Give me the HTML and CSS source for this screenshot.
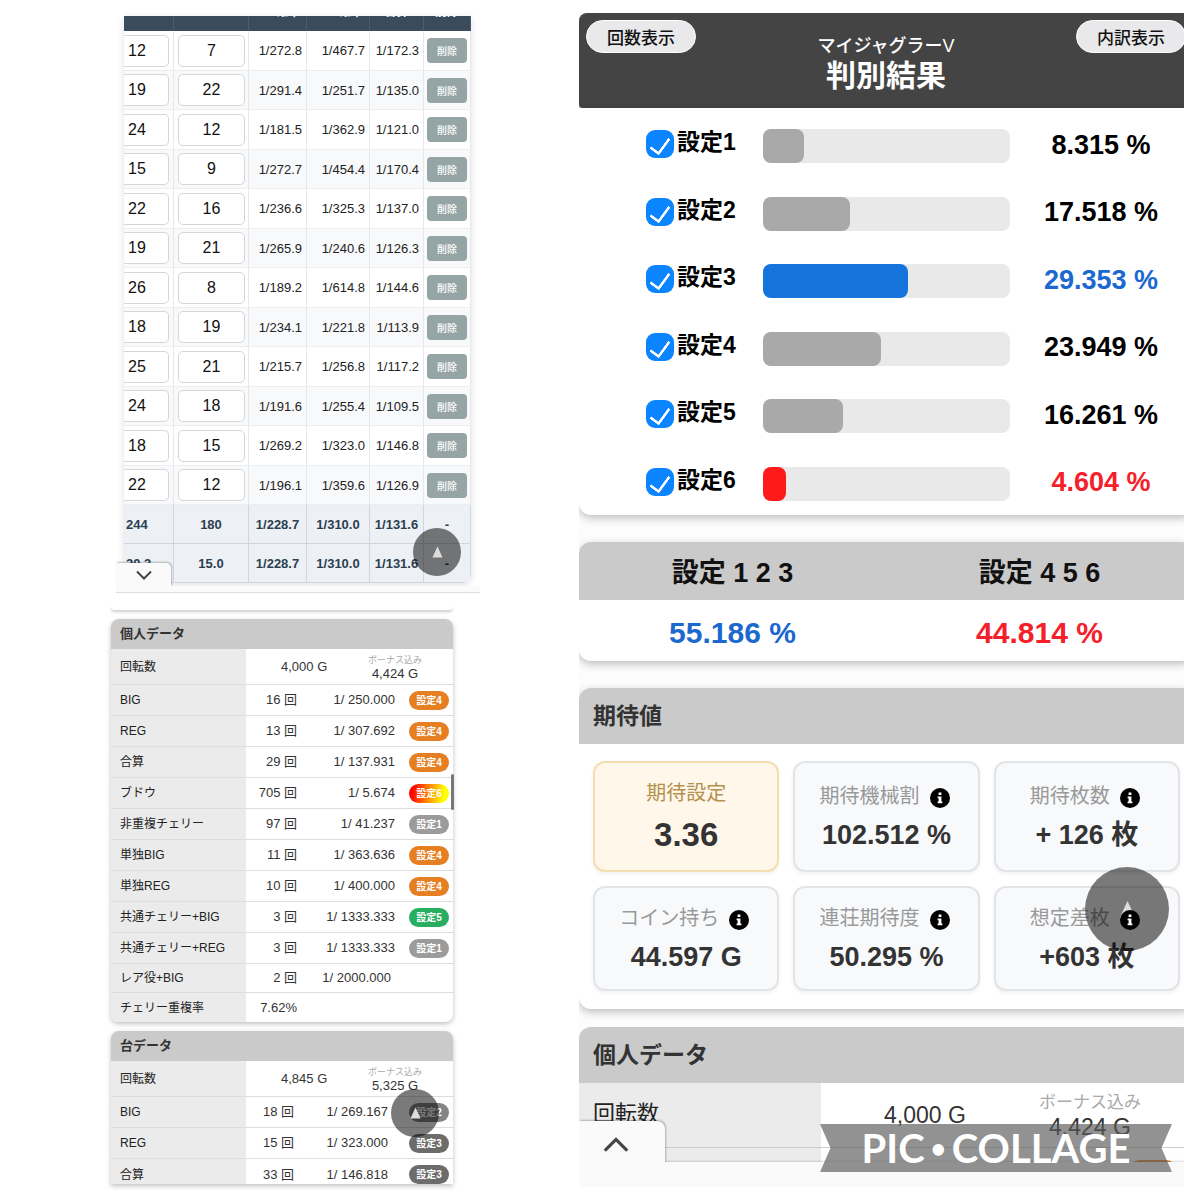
FILE: index.html
```html
<!DOCTYPE html>
<html lang="ja">
<head>
    <meta charset="UTF-8">
    <meta name="viewport" content="width=device-width, initial-scale=1.0">
    <title>マイジャグラーV 判別結果</title>
    <link rel="stylesheet" href="styles.css">
</head>
<body>

<main class="collage">
    <div class="left">

        <!-- Count history -->
        <section class="history">
            <div class="history-clip">
                <table class="history-table">
                    <colgroup>
                        <col class="c-big"><col class="c-reg"><col class="c-p1"><col class="c-p2"><col class="c-p3"><col class="c-del">
                    </colgroup>
                    <thead>
                        <tr><th></th><th></th><th>BIG確率</th><th>REG確率</th><th>合算</th><th>削除</th></tr>
                    </thead>
                    <tbody>
                        <tr><td class="cut"><input type="text" aria-label="BIG 1" value="12"></td><td class="field"><input type="text" aria-label="REG 1" value="7"></td><td>1/272.8</td><td>1/467.7</td><td>1/172.3</td><td class="del"><button>削除</button></td></tr>
                        <tr><td class="cut"><input type="text" aria-label="BIG 2" value="19"></td><td class="field"><input type="text" aria-label="REG 2" value="22"></td><td>1/291.4</td><td>1/251.7</td><td>1/135.0</td><td class="del"><button>削除</button></td></tr>
                        <tr><td class="cut"><input type="text" aria-label="BIG 3" value="24"></td><td class="field"><input type="text" aria-label="REG 3" value="12"></td><td>1/181.5</td><td>1/362.9</td><td>1/121.0</td><td class="del"><button>削除</button></td></tr>
                        <tr><td class="cut"><input type="text" aria-label="BIG 4" value="15"></td><td class="field"><input type="text" aria-label="REG 4" value="9"></td><td>1/272.7</td><td>1/454.4</td><td>1/170.4</td><td class="del"><button>削除</button></td></tr>
                        <tr><td class="cut"><input type="text" aria-label="BIG 5" value="22"></td><td class="field"><input type="text" aria-label="REG 5" value="16"></td><td>1/236.6</td><td>1/325.3</td><td>1/137.0</td><td class="del"><button>削除</button></td></tr>
                        <tr><td class="cut"><input type="text" aria-label="BIG 6" value="19"></td><td class="field"><input type="text" aria-label="REG 6" value="21"></td><td>1/265.9</td><td>1/240.6</td><td>1/126.3</td><td class="del"><button>削除</button></td></tr>
                        <tr><td class="cut"><input type="text" aria-label="BIG 7" value="26"></td><td class="field"><input type="text" aria-label="REG 7" value="8"></td><td>1/189.2</td><td>1/614.8</td><td>1/144.6</td><td class="del"><button>削除</button></td></tr>
                        <tr><td class="cut"><input type="text" aria-label="BIG 8" value="18"></td><td class="field"><input type="text" aria-label="REG 8" value="19"></td><td>1/234.1</td><td>1/221.8</td><td>1/113.9</td><td class="del"><button>削除</button></td></tr>
                        <tr><td class="cut"><input type="text" aria-label="BIG 9" value="25"></td><td class="field"><input type="text" aria-label="REG 9" value="21"></td><td>1/215.7</td><td>1/256.8</td><td>1/117.2</td><td class="del"><button>削除</button></td></tr>
                        <tr><td class="cut"><input type="text" aria-label="BIG 10" value="24"></td><td class="field"><input type="text" aria-label="REG 10" value="18"></td><td>1/191.6</td><td>1/255.4</td><td>1/109.5</td><td class="del"><button>削除</button></td></tr>
                        <tr><td class="cut"><input type="text" aria-label="BIG 11" value="18"></td><td class="field"><input type="text" aria-label="REG 11" value="15"></td><td>1/269.2</td><td>1/323.0</td><td>1/146.8</td><td class="del"><button>削除</button></td></tr>
                        <tr><td class="cut"><input type="text" aria-label="BIG 12" value="22"></td><td class="field"><input type="text" aria-label="REG 12" value="12"></td><td>1/196.1</td><td>1/359.6</td><td>1/126.9</td><td class="del"><button>削除</button></td></tr>
                    </tbody>
                    <tfoot>
                        <tr><td class="sum-cut">244</td><td>180</td><td>1/228.7</td><td>1/310.0</td><td>1/131.6</td><td>-</td></tr>
                        <tr><td class="sum-cut">20.3</td><td>15.0</td><td>1/228.7</td><td>1/310.0</td><td>1/131.6</td><td>-</td></tr>
                    </tfoot>
                </table>
            </div>
            <button class="drawer-tab" aria-label="閉じる">
                <svg viewBox="0 0 16 10"><path d="M1 1.5 8 8.5 15 1.5"/></svg>
            </button>
            <div class="drawer-bar"></div>
            <button class="to-top to-top-history" aria-label="トップへ"><svg viewBox="0 0 12 12"><path d="M6 0 11.5 12H.5z"/></svg></button>
        </section>

        <!-- Detail data -->
        <section class="detail">
            <div class="card-end"></div>

            <div class="data-card">
                <h2>個人データ</h2>
                <table class="data-table">
                    <colgroup><col class="d-label"><col class="d-count"><col class="d-rate"><col class="d-badge"></colgroup>
                    <tr class="games"><th>回転数</th><td colspan="3"><div class="spin"><span>4,000 G</span><span class="bonus"><small>ボーナス込み</small>4,424 G</span></div></td></tr>
                    <tr><th>BIG</th><td>16 回</td><td>1/ 250.000</td><td class="lv"><span class="badge s4">設定4</span></td></tr>
                    <tr><th>REG</th><td>13 回</td><td>1/ 307.692</td><td class="lv"><span class="badge s4">設定4</span></td></tr>
                    <tr><th>合算</th><td>29 回</td><td>1/ 137.931</td><td class="lv"><span class="badge s4">設定4</span></td></tr>
                    <tr><th>ブドウ</th><td>705 回</td><td>1/ 5.674</td><td class="lv"><span class="badge s6">設定6</span></td></tr>
                    <tr><th>非重複チェリー</th><td>97 回</td><td>1/ 41.237</td><td class="lv"><span class="badge s1">設定1</span></td></tr>
                    <tr><th>単独BIG</th><td>11 回</td><td>1/ 363.636</td><td class="lv"><span class="badge s4">設定4</span></td></tr>
                    <tr><th>単独REG</th><td>10 回</td><td>1/ 400.000</td><td class="lv"><span class="badge s4">設定4</span></td></tr>
                    <tr><th>共通チェリー+BIG</th><td>3 回</td><td>1/ 1333.333</td><td class="lv"><span class="badge s5">設定5</span></td></tr>
                    <tr><th>共通チェリー+REG</th><td>3 回</td><td>1/ 1333.333</td><td class="lv"><span class="badge s1">設定1</span></td></tr>
                    <tr class="short"><th>レア役+BIG</th><td>2 回</td><td class="plain">1/ 2000.000</td><td></td></tr>
                    <tr class="short"><th>チェリー重複率</th><td>7.62%</td><td></td><td></td></tr>
                </table>
                <div class="scroll-thumb"></div>
            </div>

            <div class="data-card machine">
                <h2>台データ</h2>
                <div class="machine-clip">
                    <table class="data-table">
                        <colgroup><col class="d-label"><col class="d-count"><col class="d-rate"><col class="d-badge"></colgroup>
                        <tr class="games"><th>回転数</th><td colspan="3"><div class="spin"><span>4,845 G</span><span class="bonus"><small>ボーナス込み</small>5,325 G</span></div></td></tr>
                        <tr><th>BIG</th><td>18 回</td><td>1/ 269.167</td><td class="lv"><span class="badge s2">設定2</span></td></tr>
                        <tr><th>REG</th><td>15 回</td><td>1/ 323.000</td><td class="lv"><span class="badge s3">設定3</span></td></tr>
                        <tr><th>合算</th><td>33 回</td><td>1/ 146.818</td><td class="lv"><span class="badge s3">設定3</span></td></tr>
                    </table>
                </div>
                <button class="to-top to-top-machine" aria-label="トップへ"><svg viewBox="0 0 12 12"><path d="M6 0 11.5 12H.5z"/></svg></button>
            </div>
        </section>
    </div>

    <!-- Result -->
    <div class="right">
        <div class="result">
            <header class="result-header">
                <button class="pill">回数表示</button>
                <h1><span>マイジャグラーV</span>判別結果</h1>
                <button class="pill">内訳表示</button>
            </header>

            <section class="panel settings">
                <div class="setting">
                    <input type="checkbox" id="set1" checked><label for="set1">設定1</label>
                    <div class="bar"><div class="fill" style="width: 16.63%"></div></div>
                    <span class="pct">8.315 %</span>
                </div>
                <div class="setting">
                    <input type="checkbox" id="set2" checked><label for="set2">設定2</label>
                    <div class="bar"><div class="fill" style="width: 35.036%"></div></div>
                    <span class="pct">17.518 %</span>
                </div>
                <div class="setting high">
                    <input type="checkbox" id="set3" checked><label for="set3">設定3</label>
                    <div class="bar"><div class="fill" style="width: 58.706%"></div></div>
                    <span class="pct">29.353 %</span>
                </div>
                <div class="setting">
                    <input type="checkbox" id="set4" checked><label for="set4">設定4</label>
                    <div class="bar"><div class="fill" style="width: 47.898%"></div></div>
                    <span class="pct">23.949 %</span>
                </div>
                <div class="setting">
                    <input type="checkbox" id="set5" checked><label for="set5">設定5</label>
                    <div class="bar"><div class="fill" style="width: 32.522%"></div></div>
                    <span class="pct">16.261 %</span>
                </div>
                <div class="setting low">
                    <input type="checkbox" id="set6" checked><label for="set6">設定6</label>
                    <div class="bar"><div class="fill" style="width: 9.208%"></div></div>
                    <span class="pct">4.604 %</span>
                </div>
            </section>

            <section class="panel">
                <table class="groups">
                    <tr><th>設定 1 2 3</th><th>設定 4 5 6</th></tr>
                    <tr><td class="blue">55.186 %</td><td class="red">44.814 %</td></tr>
                </table>
            </section>

            <section class="panel expect">
                <h2>期待値</h2>
                <div class="tiles">
                    <div class="tile main"><p>期待設定</p><strong>3.36</strong></div>
                    <div class="tile"><p>期待機械割 <svg class="info" viewBox="0 0 20 20"><circle cx="10" cy="10" r="10"/><path d="M8.6 4.4h2.8V7H8.6zM7.6 8.4h3.8v5h1v1.8H7.6v-1.8h1v-3.2h-1z"/></svg></p><strong>102.512 %</strong></div>
                    <div class="tile"><p>期待枚数 <svg class="info" viewBox="0 0 20 20"><circle cx="10" cy="10" r="10"/><path d="M8.6 4.4h2.8V7H8.6zM7.6 8.4h3.8v5h1v1.8H7.6v-1.8h1v-3.2h-1z"/></svg></p><strong>+ 126 枚</strong></div>
                    <div class="tile"><p>コイン持ち <svg class="info" viewBox="0 0 20 20"><circle cx="10" cy="10" r="10"/><path d="M8.6 4.4h2.8V7H8.6zM7.6 8.4h3.8v5h1v1.8H7.6v-1.8h1v-3.2h-1z"/></svg></p><strong>44.597 G</strong></div>
                    <div class="tile"><p>連荘期待度 <svg class="info" viewBox="0 0 20 20"><circle cx="10" cy="10" r="10"/><path d="M8.6 4.4h2.8V7H8.6zM7.6 8.4h3.8v5h1v1.8H7.6v-1.8h1v-3.2h-1z"/></svg></p><strong>50.295 %</strong></div>
                    <div class="tile"><p>想定差枚 <svg class="info" viewBox="0 0 20 20"><circle cx="10" cy="10" r="10"/><path d="M8.6 4.4h2.8V7H8.6zM7.6 8.4h3.8v5h1v1.8H7.6v-1.8h1v-3.2h-1z"/></svg></p><strong>+603 枚</strong></div>
                </div>
                <button class="to-top to-top-result" aria-label="トップへ"><svg viewBox="0 0 12 12"><path d="M6 0 11.5 12H.5z"/></svg></button>
            </section>

            <section class="panel personal">
                <h2>個人データ</h2>
                <div class="personal-row">
                    <span class="name">回転数</span>
                    <div class="spin"><span>4,000 G</span><span class="bonus"><small>ボーナス込み</small>4,424 G</span></div>
                </div>
                <div class="personal-next"><div class="next-badge"></div></div>
            </section>
        </div>

        <div class="drawer-bar"></div>
        <button class="drawer-tab" aria-label="開く">
            <svg viewBox="0 0 16 10"><path d="M1 8.5 8 1.5 15 8.5"/></svg>
        </button>
        <div class="watermark"><span>PIC</span><span class="dot">•</span><span>COLLAGE</span></div>
    </div>
</main>

</body>
</html>
```
FILE: styles.css
```css
* {
    box-sizing: border-box;
}

body {
    margin: 0;
    background-color: #fff;
    color: #333;
    font-family: "Liberation Sans", "Noto Sans CJK JP", sans-serif;
}

h1, h2, p {
    margin: 0;
}

button {
    padding: 0;
    border: none;
    font-family: inherit;
    cursor: pointer;
}

table {
    width: 100%;
    border-collapse: separate;
    border-spacing: 0;
    table-layout: fixed;
}

.collage {
    display: grid;
    grid-template-columns: 369fr 605fr;
    column-gap: 99px;
    align-items: start;
    padding: 13px 16px 13px 111px;
}

.left {
    padding-top: 3px;
}

/* Count history */
.history {
    position: relative;
    margin-left: 5px;
    padding: 0 9px 10px 8px;
    margin-bottom: 13px;
}

.history-clip {
    overflow: hidden;
    border-radius: 0 0 8px 8px;
    box-shadow: 0 2px 8px rgba(0, 0, 0, 0.12);
}

.history-table {
    margin-top: -23px;
    font-size: 13px;
    color: #222;
}

.c-big { width: 50px; }
.c-reg { width: 75px; }
.c-p1 { width: 58px; }
.c-p2 { width: 63px; }
.c-p3 { width: 54px; }
.c-del { width: 47px; }

.history-table th {
    height: 38px;
    padding: 0 0 1px;
    background: linear-gradient(#34495e, #3b4c5c);
    border-right: 1px solid #4b5c6c;
    color: #fff;
    font-size: 12px;
    line-height: 16px;
}

.history-table td {
    height: 39px;
    padding: 0 4px 0 0;
    border-right: 1px solid #e6e8ea;
    border-bottom: 1px solid #eceef0;
    text-align: right;
    white-space: nowrap;
}

.history-table tbody tr:nth-child(odd) td {
    height: 40px;
}

.history-table tbody tr:nth-child(even) td {
    background-color: #f8f9fa;
}

.history-table input {
    display: block;
    width: 100%;
    height: 32px;
    padding: 0;
    border: 1px solid #d4d6da;
    border-radius: 5px;
    background-color: #fff;
    color: #111;
    font-family: inherit;
    font-size: 16px;
    text-align: center;
}

.history-table .field {
    padding: 0 3px 0 4px;
}

.history-table .cut input {
    padding-left: 4px;
    border-left: none;
    border-radius: 0 5px 5px 0;
    text-align: left;
}

.history-table .del {
    padding: 0 3px;
}

.del button {
    display: block;
    width: 100%;
    height: 25px;
    border-radius: 4px;
    background-color: #95a5a6;
    color: #fff;
    font-size: 10px;
    font-weight: 500;
}

.history-table tfoot td {
    padding: 0;
    background-color: #edf1f5;
    border-color: #d0d6dd;
    color: #2c3e50;
    font-weight: bold;
    text-align: center;
}

.history-table tfoot .sum-cut {
    padding-left: 2px;
    text-align: left;
}

/* Drawer at the bottom of a screen */
.drawer-tab {
    position: absolute;
    left: 0;
    bottom: 7px;
    width: 55px;
    height: 23px;
    border-radius: 0 5px 0 0;
    background-color: #fafafa;
    box-shadow: 1px -1px 2px rgba(0, 0, 0, 0.25);
}

.drawer-tab svg {
    width: 16px;
    height: 10px;
    margin-top: 4px;
    fill: none;
    stroke: #444;
    stroke-width: 2;
}

.drawer-bar {
    position: absolute;
    left: 0;
    right: 0;
    bottom: 0;
    height: 7px;
    background-color: #fafafa;
    border-bottom: 1px solid #ddd;
}

/* Round button back to the top */
.to-top {
    position: absolute;
    display: flex;
    align-items: center;
    justify-content: center;
    width: 48px;
    height: 48px;
    border-radius: 50%;
    background-color: rgba(0, 0, 0, 0.52);
}

.to-top svg {
    width: 11px;
    height: 12px;
    fill: #ddd;
}

.to-top-history {
    right: 19px;
    bottom: 17px;
}

/* Detail data */
.detail {
    margin-right: 27px;
}

.card-end {
    height: 4px;
    margin-bottom: 9px;
    border-radius: 0 0 8px 8px;
    box-shadow: 0 2px 3px rgba(0, 0, 0, 0.2);
}

.data-card {
    position: relative;
    margin-bottom: 9px;
    border-radius: 8px;
    background-color: #fff;
    box-shadow: 0 2px 5px rgba(0, 0, 0, 0.25);
}

.data-card h2 {
    padding: 0 9px;
    border-radius: 8px 8px 0 0;
    background-color: #cacaca;
    font-size: 13px;
    line-height: 30px;
}

.d-label { width: 135px; }
.d-count { width: 51px; }
.d-rate { width: 98px; }
.d-badge { width: 58px; }
.machine .d-count { width: 48px; }
.machine .d-rate { width: 94px; }
.machine .d-badge { width: 65px; }

.data-table th,
.data-table td {
    height: 31px;
    padding: 0;
    border-bottom: 1px solid #ddd;
    font-size: 13px;
    font-weight: normal;
    line-height: 18px;
    text-align: right;
    white-space: nowrap;
}

.data-table th {
    padding-left: 9px;
    background-color: #ebebeb;
    font-size: 12px;
    text-align: left;
    color: #222;
}

.data-table .games th {
    height: 36px;
}

.data-table .short th,
.data-table .short td {
    height: 29px;
}

.data-table .plain {
    padding-right: 4px;
}

.data-table .lv {
    padding-right: 4px;
}

.data-table tr:last-child th,
.data-table tr:last-child td {
    border-bottom: none;
}

.data-table tr:last-child th {
    border-radius: 0 0 0 8px;
}

.spin {
    display: flex;
    align-items: center;
    justify-content: space-between;
    padding: 0 31px 0 35px;
}

.bonus {
    text-align: center;
    line-height: 14px;
}

.bonus small {
    display: block;
    color: #aaa;
    font-size: 9px;
}

.badge {
    display: inline-block;
    width: 40px;
    border-radius: 10px;
    color: #fff;
    font-size: 10px;
    font-weight: bold;
    line-height: 19px;
    text-align: center;
    vertical-align: middle;
}

.s1 { background-color: #9b9b9b; }
.s2 { background-color: #858585; }
.s3 { background-color: #6c6c6c; }
.s4 { background-color: #e67e22; }
.s5 { background-color: #27ae60; }
.s6 { background: linear-gradient(100deg, #f00 10%, #ff8c00 50%, #ff0 85%); }

.scroll-thumb {
    position: absolute;
    right: -1px;
    top: 155px;
    width: 3px;
    height: 36px;
    border-radius: 2px;
    background-color: #777;
}

.machine {
    margin-bottom: 0;
    border-radius: 8px 8px 0 0;
}

.machine-clip {
    max-height: 123px;
    overflow: hidden;
}

.to-top-machine {
    right: 14px;
    top: 58px;
}

/* Result screen, runs a little past the right edge of its frame */
.right {
    position: relative;
    overflow: hidden;
}

.result {
    margin-right: -9px;
    background-color: #fcfcfc;
}

.result-header {
    display: flex;
    justify-content: space-between;
    align-items: flex-start;
    height: 95px;
    padding: 7px;
    border-radius: 8px 8px 4px 4px;
    background-color: #444;
    box-shadow: 0 1px 2px rgba(0, 0, 0, 0.4);
    color: #fff;
}

.result-header h1 {
    padding-top: 15px;
    font-size: 30px;
    line-height: 38px;
    text-align: center;
}

.result-header h1 span {
    display: block;
    font-size: 18px;
    font-weight: 500;
    line-height: 22px;
}

.pill {
    width: 110px;
    height: 33px;
    border: 1px solid #fff;
    border-radius: 17px;
    background-color: #e9e9eb;
    color: #111;
    font-family: "Noto Sans CJK JP", sans-serif;
    font-size: 17px;
    font-weight: 500;
    line-height: 30px;
}

.panel {
    position: relative;
    margin-bottom: 27px;
    border-radius: 12px;
    background-color: #fff;
    box-shadow: 0 3px 8px rgba(0, 0, 0, 0.25);
}

.panel h2 {
    padding: 0 14px;
    border-radius: 12px 12px 0 0;
    background-color: #cacaca;
    font-size: 23px;
    line-height: 56px;
}

.settings {
    display: flex;
    flex-direction: column;
    justify-content: space-between;
    min-height: 407px;
    padding: 21px 34px 14px 67px;
    border-radius: 0 0 12px 12px;
}

.setting {
    display: flex;
    align-items: center;
    color: #000;
}

.setting input {
    appearance: none;
    display: flex;
    justify-content: center;
    width: 28px;
    height: 28px;
    margin: 0 3px 4px 0;
    padding-top: 4px;
    border-radius: 9px;
    background-color: #0a84ff;
}

.setting input::before {
    content: "";
    width: 9px;
    height: 17px;
    border: solid #fff;
    border-width: 0 3px 3px 0;
    border-radius: 1px;
    transform: rotate(36deg);
}

.setting label {
    width: 86px;
    padding-bottom: 8px;
    font-size: 23px;
    font-weight: bold;
    line-height: 26px;
}

.bar {
    flex: 1;
    height: 34px;
    border-radius: 8px;
    background-color: #e9e9e9;
}

.fill {
    height: 100%;
    border-radius: 8px;
    background-color: #a9a9a9;
}

.pct {
    width: 149px;
    padding-left: 33px;
    padding-bottom: 2px;
    font-size: 27px;
    font-weight: bold;
    text-align: center;
    white-space: nowrap;
}

.high .fill { background-color: #1573dc; }
.low .fill { background-color: #ff1a1a; }
.high .pct, .blue { color: #1b68cf; }
.low .pct, .red { color: #f5202a; }

.groups th {
    height: 58px;
    padding: 0 0 2px;
    background-color: #cacaca;
    color: #111;
    font-size: 27px;
}

.groups th:first-child { border-radius: 12px 0 0 0; }
.groups th:last-child { border-radius: 0 12px 0 0; }

.groups td {
    height: 61px;
    padding: 4px 0 0;
    font-size: 30px;
    font-weight: bold;
    text-align: center;
}

.expect {
    margin-bottom: 18px;
}

.tiles {
    display: grid;
    grid-template-columns: repeat(3, 1fr);
    grid-template-rows: 111px 105px;
    gap: 14px;
    padding: 17px 13px 18px 14px;
}

.tile {
    display: flex;
    flex-direction: column;
    align-items: center;
    justify-content: center;
    border: 2px solid #e2e4e7;
    border-radius: 12px;
    background-color: #f8f9fb;
    box-shadow: 0 2px 4px rgba(0, 0, 0, 0.06);
}

.tile p {
    display: flex;
    align-items: center;
    gap: 10px;
    color: #999;
    font-size: 20px;
    line-height: 36px;
}

.tile strong {
    font-size: 27px;
    line-height: 42px;
}

.main {
    border-color: #f3deb0;
    background-color: #fff7ea;
}

.main p {
    color: #b5904c;
}

.main strong {
    font-size: 33px;
    line-height: 48px;
}

.info {
    position: relative;
    z-index: 1;
    width: 20px;
    height: 20px;
    margin: 4px 4px 0 0;
}

.info path {
    fill: #fff;
}

.to-top-result {
    right: 24px;
    top: 179px;
    width: 84px;
    height: 84px;
}

.to-top-result svg {
    width: 17px;
    height: 19px;
}

.personal {
    margin-bottom: 0;
    border-radius: 12px 12px 0 0;
    box-shadow: none;
}

.personal-row {
    display: flex;
    height: 65px;
    border-bottom: 1px solid #ccc;
}

.personal-row .name {
    width: 242px;
    padding-left: 14px;
    background-color: #ebebeb;
    color: #222;
    font-size: 22px;
    line-height: 62px;
}

.personal-row .spin {
    flex: 1;
    padding: 0 52px 0 63px;
    font-size: 23px;
}

.personal-row .bonus {
    line-height: 24px;
}

.personal-row small {
    font-size: 17px;
}

.personal-next {
    display: flex;
    justify-content: flex-end;
    align-items: flex-end;
    height: 39px;
    padding-right: 14px;
    background: linear-gradient(90deg, #ebebeb 242px, #fff 242px);
}

.next-badge {
    width: 52px;
    height: 27px;
    border-radius: 14px 14px 0 0;
    background-color: #e67e22;
}

.right .drawer-bar {
    height: 25px;
    border: none;
    box-shadow: 0 -1px 2px rgba(0, 0, 0, 0.15);
}

.right .drawer-tab {
    bottom: 24px;
    width: 86px;
    height: 42px;
    border-radius: 0 8px 0 0;
    clip-path: inset(-4px -4px 0 0);
}

.right .drawer-tab svg {
    width: 26px;
    height: 16px;
    margin-right: 12px;
    margin-top: 8px;
}

.watermark {
    position: absolute;
    right: 12px;
    bottom: 15px;
    display: flex;
    align-items: center;
    justify-content: center;
    gap: 6px;
    width: 352px;
    background-color: rgba(90, 90, 90, 0.66);
    clip-path: polygon(0 0, 100% 0, 97% 50%, 100% 100%, 0 100%, 3% 50%);
    color: #fff;
    font-family: Lato, sans-serif;
    font-size: 40px;
    font-weight: bold;
    line-height: 48px;
}

.watermark .dot {
    font-size: 26px;
}
```
